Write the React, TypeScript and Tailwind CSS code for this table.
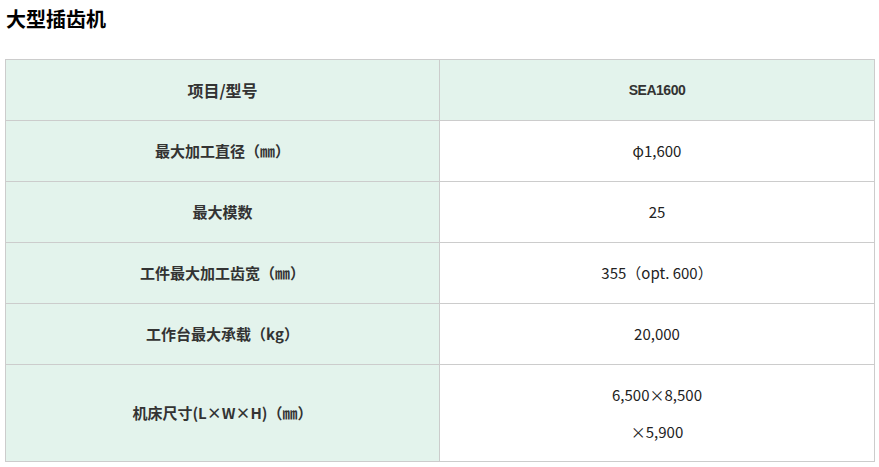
import React from 'react';

const rows = [
  { label: '最大加工直径（㎜）', value: ['φ1,600'] },
  { label: '最大模数', value: ['25'] },
  { label: '工件最大加工齿宽（㎜）', value: ['355（opt. 600）'] },
  { label: '工作台最大承载（kg）', value: ['20,000'] },
  { label: '机床尺寸(L×W×H)（㎜）', value: ['6,500×8,500', '×5,900'] },
];

export default function App() {
  return (
    <div
      className="w-[879px] h-[467px] bg-white px-[5px] pt-[6px]"
      style={{ fontFamily: '"Noto Sans CJK SC", "Noto Sans", sans-serif' }}
    >
      <h1 className="pl-[1px] text-[20px] font-bold leading-[26px] text-black">大型插齿机</h1>
      <table className="mt-[27px] w-[870px] border-collapse text-[15px] text-[#333]">
        <colgroup>
          <col className="w-[434px]" />
          <col />
        </colgroup>
        <thead>
          <tr className="h-[61px] bg-[#e3f3ec]">
            <th className="border border-[#cccccc] text-center text-[16px] font-bold">项目/型号</th>
            <th
              className="border border-[#cccccc] text-center text-[14px] font-bold tracking-[-0.5px]"
              style={{ fontFamily: '"Liberation Sans", Arial, sans-serif' }}
            >
              SEA1600
            </th>
          </tr>
        </thead>
        <tbody>
          {rows.map((r) => (
            <tr key={r.label} className={r.value.length > 1 ? 'h-[97px]' : 'h-[61px]'}>
              <td className="border border-[#cccccc] bg-[#e3f3ec] text-center font-bold">{r.label}</td>
              <td className="border border-[#cccccc] bg-white text-center text-[#222]">
                <div className="flex flex-col items-center gap-[15px]">
                  {r.value.map((v) => (
                    <span key={v} className="leading-[22px]">{v}</span>
                  ))}
                </div>
              </td>
            </tr>
          ))}
        </tbody>
      </table>
    </div>
  );
}
